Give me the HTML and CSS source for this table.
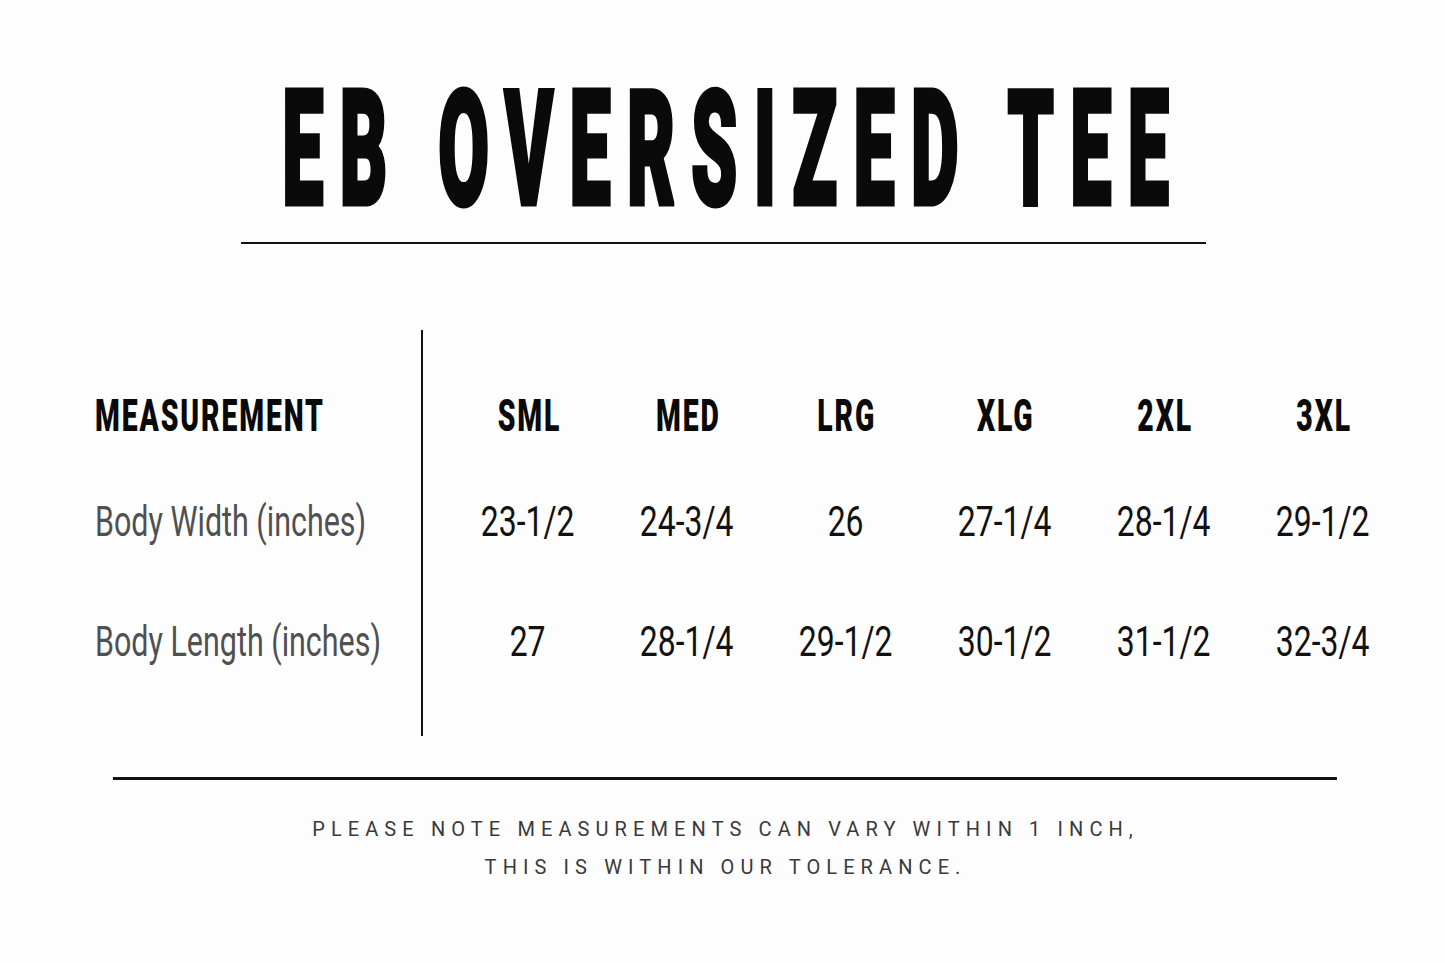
FILE: index.html
```html
<!DOCTYPE html>
<html lang="en">
<head>
<meta charset="utf-8">
<title>EB Oversized Tee – Size Chart</title>
<link rel="stylesheet" href="styles.css">
</head>
<body>
<main class="sheet">
  <h1 class="title"><span class="title-text">EB OVERSIZED TEE</span></h1>
  <hr class="rule rule-title">

  <section class="chart">
    <div class="labels">
      <div class="cell"><span class="head head-left">MEASUREMENT</span></div>
      <div class="cell"><span class="label">Body Width (inches)</span></div>
      <div class="cell"><span class="label">Body Length (inches)</span></div>
    </div>
    <div class="vrule"></div>
    <div class="values">
      <span class="head">SML</span>
      <span class="head">MED</span>
      <span class="head">LRG</span>
      <span class="head">XLG</span>
      <span class="head">2XL</span>
      <span class="head">3XL</span>

      <span class="num">23-1/2</span>
      <span class="num">24-3/4</span>
      <span class="num">26</span>
      <span class="num">27-1/4</span>
      <span class="num">28-1/4</span>
      <span class="num">29-1/2</span>

      <span class="num">27</span>
      <span class="num">28-1/4</span>
      <span class="num">29-1/2</span>
      <span class="num">30-1/2</span>
      <span class="num">31-1/2</span>
      <span class="num">32-3/4</span>
    </div>
  </section>

  <hr class="rule rule-bottom">

  <p class="note">
    <span class="note-line">PLEASE NOTE MEASUREMENTS CAN VARY WITHIN 1 INCH,</span>
    <span class="note-line">THIS IS WITHIN OUR TOLERANCE.</span>
  </p>
</main>
</body>
</html>
```

FILE: styles.css
```css
html, body {
  margin: 0;
  padding: 0;
  background: #fdfdfd;
  overflow: hidden;
}

body {
  font-family: Roboto, "Liberation Sans", Arial, sans-serif;
  color: #111;
}

.sheet {
  width: 1445px;
  height: 963px;
  padding-top: 66px;
  box-sizing: border-box;
}

.title {
  margin: 0;
  display: flex;
  justify-content: center;
  font-size: 160px;
  line-height: 167px;
  font-weight: 900;
  color: #0a0a0a;
}

.title-text {
  flex-shrink: 0;
  white-space: nowrap;
  letter-spacing: 35.5px;
  margin-right: -22px;
  -webkit-text-stroke: 5px #0a0a0a;
  transform: scaleX(0.46);
}

.rule {
  border: 0;
  margin: 0 auto;
  background: #111;
}

.rule-title {
  width: 965px;
  height: 2px;
  margin-top: 9px;
  position: relative;
  left: 1px;
}

.chart {
  display: flex;
  margin: 86px 0 0 95px;
}

.labels,
.values {
  display: grid;
  grid-template-rows: 106px 108px 132px;
  align-items: center;
  padding: 32px 0 28px;
}

.labels {
  width: 326px;
}

.values {
  grid-template-columns: repeat(6, 159px);
  justify-items: center;
  padding-left: 25px;
}

.vrule {
  width: 2px;
  background: #151515;
}

.cell {
  line-height: 1;
}

.head {
  display: inline-block;
  font-size: 45px;
  line-height: 1;
  font-weight: 900;
  letter-spacing: 3px;
  margin-right: -3px;
  color: #0a0a0a;
  transform: scaleX(0.63);
  white-space: nowrap;
}

.head-left {
  transform-origin: left center;
}

.label {
  display: inline-block;
  font-size: 42px;
  line-height: 1;
  font-weight: 400;
  color: #505050;
  white-space: nowrap;
  transform: scaleX(0.725);
  transform-origin: left center;
}

.num {
  display: inline-block;
  font-size: 42px;
  line-height: 1;
  font-weight: 400;
  color: #111;
  white-space: nowrap;
  transform: scaleX(0.76);
}

.rule-bottom {
  width: 1224px;
  height: 3px;
  margin-top: 41px;
  position: relative;
  left: 2px;
}

.note {
  margin: 30px 0 0;
  text-align: center;
  font-size: 20px;
  line-height: 38px;
  font-weight: 400;
  color: #3a3a3a;
}

.note-line {
  display: block;
  letter-spacing: 6.1px;
  padding-left: 6.1px;
}
```
